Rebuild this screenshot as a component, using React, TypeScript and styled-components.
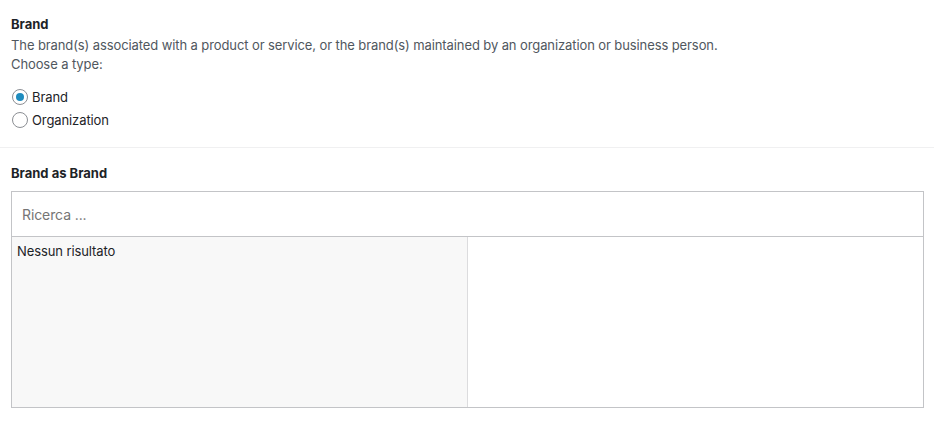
import React, { useState } from "react"
import styled, { createGlobalStyle } from "styled-components"

const GlobalStyle = createGlobalStyle`
  html, body {
    margin: 0;
    padding: 0;
    background: #ffffff;
  }
  body {
    font-family: Inter, "Liberation Sans", Arial, sans-serif;
    font-size: 13px;
    letter-spacing: -0.1px;
    color: #1d2327;
  }
`

const Page = styled.div`
  display: flex;
  flex-direction: column;
  width: 934px;
`
const Section = styled.div<{ $bordered?: boolean }>`
  display: flex;
  flex-direction: column;
  padding: ${({ $bordered }) => ($bordered ? "15px 11px 19px" : "16px 10px 0 11px")};
  border-bottom: ${({ $bordered }) => ($bordered ? "1px solid #f0f0f1" : "none")};
`
const Heading = styled.h3`
  margin: 0 0 3px;
  font-size: 13px;
  font-weight: 700;
  letter-spacing: 0;
  line-height: 18px;
  color: #1d2327;
`
const Description = styled.p`
  margin: 0;
  font-size: 13px;
  line-height: 19px;
  color: #50575e;
`
const RadioList = styled.div`
  display: flex;
  flex-direction: column;
  gap: 7px;
  margin-top: 15px;
`
const RadioLabel = styled.label`
  display: flex;
  align-items: center;
  gap: 4px;
  height: 16px;
  font-size: 13px;
  color: #1d2327;
  cursor: pointer;
`
const RadioDot = styled.span<{ $checked: boolean }>`
  box-sizing: border-box;
  display: flex;
  align-items: center;
  justify-content: center;
  width: 16px;
  height: 16px;
  margin-left: 1px;
  border-radius: 50%;
  border: 1px solid #8c8f94;
  background: #ffffff;

  &::after {
    content: "";
    width: 8px;
    height: 8px;
    border-radius: 50%;
    background: #1e8cbe;
    display: ${({ $checked }) => ($checked ? "block" : "none")};
  }
`
const Picker = styled.div`
  display: flex;
  flex-direction: column;
  width: 913px;
  height: 217px;
  box-sizing: border-box;
  border: 1px solid #c3c4c7;
  margin-top: 6px;
`
const SearchInput = styled.input`
  box-sizing: border-box;
  height: 45px;
  flex-shrink: 0;
  border: none;
  border-bottom: 1px solid #c3c4c7;
  padding: 0 10px;
  font-family: Inter, "Liberation Sans", Arial, sans-serif;
  font-size: 14px;
  letter-spacing: -0.1px;
  color: #1d2327;
  outline: none;

  &::placeholder {
    color: #757575;
  }
`
const Panes = styled.div`
  display: grid;
  grid-template-columns: 456px 1fr;
  flex: 1;
`
const ResultsPane = styled.div`
  background: #f8f8f8;
  border-right: 1px solid #dcdcde;
  padding: 5px 5px;
  font-size: 13px;
  line-height: 18px;
  color: #1d2327;
`
const SelectedPane = styled.div`
  background: #ffffff;
`

const types = ["Brand", "Organization"]

const App = () => {
  const [type, setType] = useState("Brand")

  return (
    <Page>
      <GlobalStyle />
      <Section $bordered>
        <Heading>Brand</Heading>
        <Description>
          The brand(s) associated with a product or service, or the brand(s)
          maintained by an organization or business person.
        </Description>
        <Description>Choose a type:</Description>
        <RadioList>
          {types.map((t) => (
            <RadioLabel key={t} onClick={() => setType(t)}>
              <RadioDot $checked={type === t} />
              {t}
            </RadioLabel>
          ))}
        </RadioList>
      </Section>
      <Section>
        <Heading>Brand as {type}</Heading>
        <Picker>
          <SearchInput placeholder="Ricerca ..." />
          <Panes>
            <ResultsPane>Nessun risultato</ResultsPane>
            <SelectedPane />
          </Panes>
        </Picker>
      </Section>
    </Page>
  )
}

export default App
